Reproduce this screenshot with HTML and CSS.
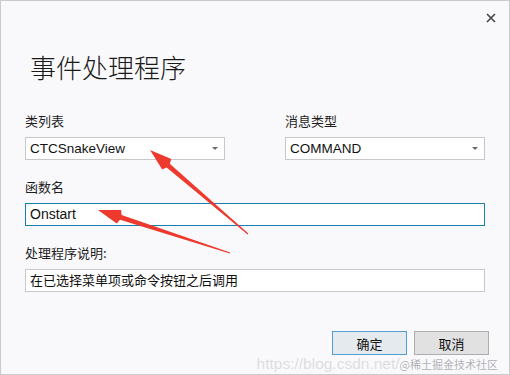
FILE: index.html
```html
<!DOCTYPE html>
<html lang="zh-CN">
<head>
    <meta charset="UTF-8">
    <title>事件处理程序</title>
    <link rel="stylesheet" href="styles.css">
</head>
<body>
    <div class="dialog">
        <div class="titlebar">
            <button class="close" aria-label="关闭">
                <svg width="10" height="10" viewBox="0 0 10 10">
                    <path d="M1 1 L9 9 M9 1 L1 9" stroke="#444" stroke-width="1.6" fill="none"/>
                </svg>
            </button>
        </div>
        <h1>事件处理程序</h1>

        <div class="form">
            <div class="field">
                <label>类列表</label>
                <div class="combo">
                    <span>CTCSnakeView</span>
                    <span class="caret"></span>
                </div>
            </div>
            <div class="field">
                <label>消息类型</label>
                <div class="combo">
                    <span>COMMAND</span>
                    <span class="caret"></span>
                </div>
            </div>
            <div class="field wide">
                <label>函数名</label>
                <div class="input focused">Onstart</div>
            </div>
            <div class="field wide">
                <label>处理程序说明:</label>
                <div class="input">在已选择菜单项或命令按钮之后调用</div>
            </div>
        </div>

        <div class="actions">
            <button class="btn primary">确定</button>
            <button class="btn">取消</button>
        </div>

        <svg class="arrows" width="510" height="375" viewBox="0 0 510 375">
            <polygon fill="#ee3a2e" points="150,150 162.2,169.6 166.6,167.5 247.6,234.5 248.4,233.5 169.8,163.7 171.3,159"/>
            <polygon fill="#ee3a2e" points="98,210 116.7,223.5 120,219.8 229.8,253.6 230.2,252.4 121.6,215 121.1,210.1"/>
        </svg>

        <div class="watermark">https://blog.csdn.net/<small>@稀土掘金技术社区</small></div>
    </div>
</body>
</html>
```

FILE: styles.css
```css
body {
    margin: 0;
    font-family: "Liberation Sans", "Noto Sans CJK SC", sans-serif;
    background: #fff;
}

.dialog {
    position: relative;
    width: 510px;
    height: 375px;
    box-sizing: border-box;
    border: 1px solid #cbcbcb;
    background: #f9f9fb;
    padding: 0 24px;
    color: #1e1e1e;
    overflow: hidden;
}

.titlebar {
    height: 34px;
    display: flex;
    justify-content: flex-end;
    align-items: center;
    margin-right: -24px;
}

.close {
    width: 34px;
    height: 34px;
    border: none;
    background: none;
    padding: 0;
    display: flex;
    justify-content: center;
    align-items: center;
    margin-right: 1px;
}

h1 {
    font-family: "Noto Sans CJK SC", sans-serif;
    font-size: 26px;
    font-weight: 300;
    line-height: 30px;
    margin: 17px 0 0;
    padding-left: 5px;
    color: #1a1a1a;
}

.form {
    display: grid;
    grid-template-columns: 200px 200px;
    column-gap: 60px;
    row-gap: 18px;
    margin-top: 30px;
}

.field {
    display: flex;
    flex-direction: column;
    gap: 7px;
}

.field.wide {
    grid-column: 1 / 3;
}

.field label {
    font-family: "Noto Sans CJK SC", sans-serif;
    font-size: 13px;
    line-height: 18px;
    color: #1e1e1e;
}

.combo,
.input {
    height: 23px;
    box-sizing: border-box;
    border: 1px solid #c8c8c8;
    background: #fff;
    font-size: 13.5px;
    line-height: 21px;
    padding: 0 4px;
    color: #111;
    white-space: nowrap;
}

.combo {
    display: flex;
    justify-content: space-between;
    align-items: center;
}

.caret {
    width: 0;
    height: 0;
    border-left: 3px solid transparent;
    border-right: 3px solid transparent;
    border-top: 3px solid #6a6a6a;
    margin-right: 2px;
}

.input {
    font-size: 13px;
}

.input.focused {
    border-color: #1a7eae;
    font-size: 14px;
}

.actions {
    display: flex;
    justify-content: flex-end;
    gap: 7px;
    margin-top: 39px;
    margin-right: -4px;
}

.btn {
    width: 75px;
    height: 24px;
    box-sizing: border-box;
    border: 1px solid #adadad;
    background: #e1e1e1;
    font-family: "Noto Sans CJK SC", sans-serif;
    font-size: 13px;
    color: #111;
    padding: 0;
}

.btn.primary {
    border-color: #4f9fd6;
    background: #e5eaef;
}

.arrows {
    position: absolute;
    left: -1px;
    top: -1px;
    pointer-events: none;
}

.watermark {
    position: absolute;
    right: 11px;
    bottom: 1px;
    font-family: "Liberation Sans", "Noto Sans CJK SC", sans-serif;
    font-size: 15.5px;
    color: rgba(205, 205, 210, 0.7);
    white-space: nowrap;
    text-shadow: 0 0 1px rgba(255, 255, 255, 0.8);
}

.watermark small {
    font-family: "Noto Sans CJK SC", sans-serif;
    font-size: 11px;
    color: rgba(150, 150, 155, 0.75);
}
```
